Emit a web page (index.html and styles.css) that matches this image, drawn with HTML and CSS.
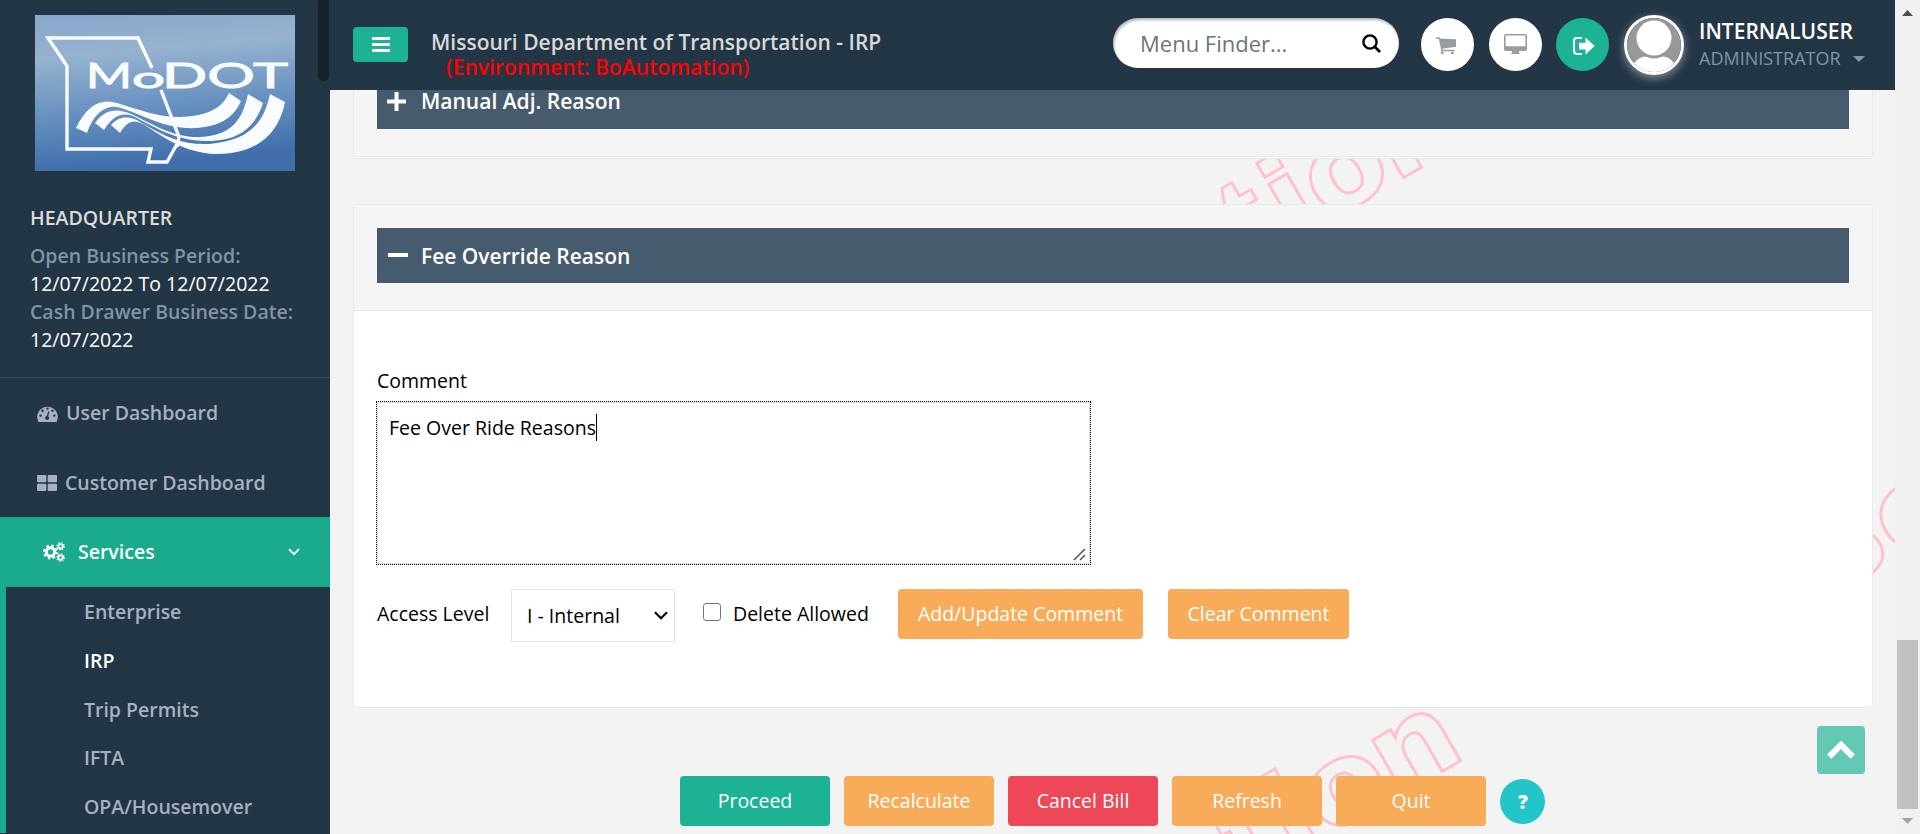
FILE: index.html
```html
<!DOCTYPE html>
<html lang="en">
<head>
<meta charset="utf-8">
<title>Missouri Department of Transportation - IRP</title>
<link rel="stylesheet" href="styles.css">
</head>
<body>
<div class="app">
  <aside class="sidebar">
    <svg class="logo" viewBox="0 0 260 156">
      <defs>
        <linearGradient id="sky" x1="0" y1="0" x2="0.15" y2="1">
          <stop offset="0" stop-color="#8aa6cb"/><stop offset="0.28" stop-color="#96b2cf"/>
          <stop offset="0.65" stop-color="#6690c0"/><stop offset="1" stop-color="#3f6eab"/>
        </linearGradient>
      </defs>
      <rect width="260" height="156" fill="url(#sky)"/>
      <path d="M117 53L103 23H13L32 51V134H116L113 147H132L142 129M126 75L144 122L142 132" fill="none" stroke="#f8fcff" stroke-width="3.4"/>
      <g fill="#f8fcff">
        <path d="M41 113C52 90 66 83 82 88C108 96 130 105 157 101C178 98 188 91 194 78L206 86C198 104 184 111 162 113C128 115 104 97 82 92C68 90 58 101 52 118Z"/>
        <path d="M60 108C70 94 82 93 96 99C118 109 138 123 166 122C194 120 207 108 213 79L228 88C219 115 202 126 171 126C140 126 116 110 98 101C84 96 76 104 69 115Z"/>
        <path d="M76 110C84 101 94 100 107 108C130 122 148 130 174 129C210 126 228 112 235 79L250 87C243 122 219 139 181 139C150 138 130 123 108 109C97 103 91 108 85 118Z"/>
      </g>
      <g class="logo-text">
        <text x="51" y="73" font-size="35" textLength="46" lengthAdjust="spacingAndGlyphs">M</text>
        <text x="97" y="73" font-size="29" textLength="33" lengthAdjust="spacingAndGlyphs">o</text>
        <text x="127" y="73" font-size="35" textLength="126" lengthAdjust="spacingAndGlyphs">DOT</text>
      </g>
    </svg>
    <div class="side-thumb"></div>
    <div class="office">
      <div class="office-name">HEADQUARTER</div>
      <div class="muted">Open Business Period:</div>
      <div class="value">12/07/2022 To 12/07/2022</div>
      <div class="muted">Cash Drawer Business Date:</div>
      <div class="value">12/07/2022</div>
    </div>
    <nav class="menu">
      <a class="item user"><svg class="i-gauge" viewBox="0 0 21 17"><path d="M1.2 16.4A10.3 10.3 0 1 1 19.8 16.4Q19.5 17 19 17H2Q1.5 17 1.2 16.4Z" fill="#a7b1c2"/><g fill="#233646"><circle cx="3.6" cy="10.6" r="1.2"/><circle cx="5.5" cy="5.8" r="1.2"/><circle cx="10.5" cy="3.6" r="1.2"/><circle cx="15.5" cy="5.8" r="1.2"/><circle cx="17.4" cy="10.6" r="1.2"/><circle cx="10.1" cy="12.9" r="2"/></g><path d="M10.1 12.5L11.9 6.5" stroke="#233646" stroke-width="1.3"/></svg><span>User Dashboard</span></a>
      <a class="item customer"><svg class="i-grid" viewBox="0 0 20 16" fill="#a7b1c2"><rect width="9.3" height="7.3" rx="1"/><rect x="10.7" width="9.3" height="7.3" rx="1"/><rect y="8.7" width="9.3" height="7.3" rx="1"/><rect x="10.7" y="8.7" width="9.3" height="7.3" rx="1"/></svg><span>Customer Dashboard</span></a>
      <a class="item services"><svg class="i-cogs" viewBox="0 0 22 20" fill="none" stroke="#fff"><circle cx="7.5" cy="10" r="4.2" stroke-width="3"/><circle cx="7.5" cy="10" r="6.5" stroke-width="2" stroke-dasharray="2.55 2.55"/><circle cx="17.6" cy="4.3" r="2.2" stroke-width="1.8"/><circle cx="17.6" cy="4.3" r="3.6" stroke-width="1.3" stroke-dasharray="1.41 1.41"/><circle cx="17.6" cy="15.6" r="2.2" stroke-width="1.8"/><circle cx="17.6" cy="15.6" r="3.6" stroke-width="1.3" stroke-dasharray="1.41 1.41"/></svg><span>Services</span><svg class="i-down" viewBox="0 0 12 8"><path d="M1 1.2L6 6.2L11 1.2" fill="none" stroke="#fff" stroke-width="1.8"/></svg></a>
      <div class="sub">
        <a>Enterprise</a>
        <a class="on">IRP</a>
        <a>Trip Permits</a>
        <a>IFTA</a>
        <a>OPA/Housemover</a>
      </div>
    </nav>
  </aside>

  <div class="page">
    <header class="top">
      <div class="burger"><svg width="18" height="15" viewBox="0 0 18 15"><path d="M0 1.6H18M0 7.5H18M0 13.4H18" stroke="#fff" stroke-width="3"/></svg></div>
      <div class="title">
        <div>Missouri Department of Transportation - IRP</div>
        <div class="env">(Environment: BoAutomation)</div>
      </div>
      <div class="search"><span>Menu Finder...</span><svg width="19" height="19" viewBox="0 0 19 19" fill="none" stroke="#000"><circle cx="8" cy="8" r="6.6" stroke-width="2.4"/><path d="M12.5 12.5L18 18" stroke-width="2.8"/></svg></div>
      <div class="round cart"><svg width="20" height="18" viewBox="0 0 20 18"><path d="M3.4 1.5L20 2.3V9.8L6 11.7Z" fill="#999da1"/><path d="M0 .9H3.4L6 13.6M5 13.4H18.5" fill="none" stroke="#999da1" stroke-width="1.5"/><circle cx="6.3" cy="15.9" r="1.4" fill="#999da1"/><circle cx="16.4" cy="15.9" r="1.4" fill="#999da1"/></svg></div>
      <div class="round screen"><svg width="23" height="20" viewBox="0 0 23 20"><path d="M2 0H21Q23 0 23 2V15Q23 17 21 17H15V18.5L16 20H7L8 18.5V17H2Q0 17 0 15V2Q0 0 2 0ZM1.6 1.5V12.2H21.4V1.5Z" fill="#999da1" fill-rule="evenodd"/></svg></div>
      <div class="round exit"><svg width="22" height="18" viewBox="0 0 22 18"><path d="M9 1H4Q1 1 1 4V14Q1 17 4 17H9" fill="none" stroke="#fff" stroke-width="2.1"/><path d="M6 5.8H12.5V.6L21.6 9L12.5 17.4V12.4H6Z" fill="#fff"/></svg></div>
      <div class="avatar"><svg viewBox="0 0 54 54"><circle cx="27" cy="27" r="27" fill="#989898"/><circle cx="27" cy="20" r="17.5" fill="#fff"/><path d="M7 45Q15 37 20 39Q27 42 34 39Q40 37 47 45Q39 54 27 54Q15 54 7 45Z" fill="#fff"/></svg></div>
      <div class="who"><div class="name">INTERNALUSER</div><div class="role">ADMINISTRATOR<i></i></div></div>
    </header>

    <main class="main">
      <svg class="watermark" width="1565" height="744" viewBox="330 90 1565 744" aria-hidden="true">
        <defs>
          <text id="mark" x="-811 -727 -640 -552 -480 -427 -351 -238 -169 -122 -83.5 -9" y="0">BoAu<tspan class="arm">t</tspan>oma<tspan class="arm">t</tspan>ion</text>
        </defs>
        <use href="#mark" transform="translate(1403 178) rotate(-30) scale(1.06 1)"/>
        <use href="#mark" transform="translate(1403 794) rotate(-30) scale(1.06 1)"/>
        <use href="#mark" transform="translate(2564 175) rotate(-30) scale(1.06 1)"/>
      </svg>
      <section class="panel first">
        <div class="bar"><svg width="19" height="19" viewBox="0 0 19 19"><path d="M0 9.5H19M9.5 0V19" stroke="#fff" stroke-width="4"/></svg><span>Manual Adj. Reason</span></div>
      </section>
      <section class="panel second">
        <div class="head">
          <div class="bar"><svg width="20" height="19" viewBox="0 0 20 19"><path d="M0 9H20" stroke="#fff" stroke-width="4"/></svg><span>Fee Override Reason</span></div>
        </div>
        <div class="body">
          <label class="lbl">Comment</label>
          <div class="area"><span>Fee Over Ride Reasons</span><i class="caret"></i><svg class="grip" width="13" height="13" viewBox="0 0 13 13"><path d="M1 12L12 1M7 12L12 7" stroke="#555" stroke-width="1.5"/></svg></div>
          <div class="row">
            <span class="lvl">Access Level</span>
            <div class="select"><span>I - Internal</span><svg width="14" height="9" viewBox="0 0 14 9"><path d="M1 1.2L7 7.2L13 1.2" fill="none" stroke="#000" stroke-width="2.2"/></svg></div>
            <i class="check"></i>
            <span class="del">Delete Allowed</span>
            <div class="btn add">Add/Update Comment</div>
            <div class="btn clear">Clear Comment</div>
          </div>
        </div>
      </section>
      <div class="actions">
        <div class="btn act green">Proceed</div>
        <div class="btn act">Recalculate</div>
        <div class="btn act red">Cancel Bill</div>
        <div class="btn act">Refresh</div>
        <div class="btn act">Quit</div>
        <div class="help">?</div>
      </div>
      <div class="to-top"><svg width="28" height="18" viewBox="0 0 28 18"><path d="M2.2 15.6L14 3.8L25.8 15.6" fill="none" stroke="#fff" stroke-width="6"/></svg></div>
    </main>
  </div>

  <div class="scroll">
    <svg width="11" height="6" viewBox="0 0 11 6"><path d="M0 6L5.5 0L11 6Z" fill="#505050"/></svg>
    <div class="thumb"></div>
    <svg class="dn" width="11" height="6" viewBox="0 0 11 6"><path d="M0 0L5.5 6L11 0Z" fill="#a3a3a3"/></svg>
  </div>
</div>
</body>
</html>
```
FILE: styles.css
```css
* { box-sizing: border-box; }
body { margin: 0; font-family: "Open Sans", "Noto Sans", sans-serif; font-size: 19.5px; color: #000; background: #f3f3f3; overflow: hidden; }
svg { display: block; flex: none; }
span, div, a { white-space: nowrap; }
.app { display: grid; grid-template-columns: 330px 1565px 25px; height: 834px; overflow: hidden; }

.sidebar { background: #233646; height: 834px; overflow: hidden; position: relative; }
.logo { width: 260px; height: 156px; margin: 15px 0 0 35px; }
.logo-text { font-family: Lato, sans-serif; font-weight: 400; fill: #f8fcff; stroke: #f8fcff; stroke-width: 0.9; }
.side-thumb { position: absolute; left: 318px; top: -4px; width: 11px; height: 85px; border-radius: 6px; background: #17212a; }
.office { height: 207px; padding: 33px 0 0 30px; border-bottom: 1px solid #3c4d5c; line-height: 28px; }
.office-name { color: #dcdcdc; font-weight: 600; margin-bottom: 10px; }
.muted { color: #8095a8; font-weight: 600; }
.value { color: #fff; }
.menu { font-weight: 600; color: #a7b1c2; line-height: 28px; }
.item { display: flex; align-items: center; height: 70px; }
.user { padding-left: 37px; gap: 8px; }
.customer { padding-left: 37px; gap: 8px; height: 69px; }
.services { height: 70px; padding: 0 30px 0 43px; background: #1aaa8d; color: #fff; }
.i-gauge { width: 21px; height: 17px; }
.i-grid { width: 20px; height: 16px; }
.i-cogs { width: 22px; height: 20px; margin-right: 13px; }
.i-down { width: 12px; height: 8px; margin-left: auto; }
.sub { border-left: 6px solid #1aaa8d; padding-left: 78px; height: 246px; display: flex; flex-direction: column; }
.sub a { height: 48.8px; padding-top: 11px; flex: none; }
.sub .on { color: #fff; }

.page { height: 834px; overflow: hidden; }
.top { height: 90px; background: #233646; display: flex; align-items: flex-start; padding-left: 23px; position: relative; z-index: 2; }
.burger { width: 55px; height: 35px; margin-top: 27px; border-radius: 4px; background: #1cb394; display: flex; align-items: center; justify-content: center; }
.title { margin: 30px 0 0 23px; width: 682px; font-size: 21px; font-weight: 600; line-height: 25px; color: #d9d9d9; }
.env { color: #f00; padding-left: 15px; }
.search { width: 286px; height: 50px; margin-top: 18px; border-radius: 25px; background: #fff; box-shadow: inset 1px 2px 3px rgba(0,0,0,.3); display: flex; align-items: center; padding: 0 18px 0 27px; justify-content: space-between; font-size: 22px; color: #6c757d; }
.round { width: 53px; height: 53px; margin-top: 18px; border-radius: 50%; background: #fff; display: flex; align-items: center; justify-content: center; }
.cart { margin-left: 22px; padding: 3px 4px 0 0; }
.screen { margin-left: 15px; padding-bottom: 2px; }
.exit { margin-left: 14px; background: #1cb394; padding: 3px 0 0 2px; }
.avatar { width: 60px; height: 60px; margin: 15px 0 0 15px; border-radius: 50%; border: 3px solid #fff; box-shadow: 0 3px 10px rgba(255,255,255,.45); }
.who { margin: 17px 0 0 15px; line-height: 28px; color: #fff; }
.name { font-weight: 600; font-size: 21px; height: 27px; }
.role { font-size: 18px; color: #8095a8; display: flex; align-items: center; gap: 12px; height: 27px; }
.role i { border: 6px solid transparent; border-top-color: #8095a8; border-bottom: 0; margin-top: 3px; }

.main { position: relative; height: 744px; background: #f3f3f3; padding: 0 23px; }
.watermark { position: absolute; left: 0; top: 0; font-family: "DejaVu Sans", sans-serif; font-weight: 700; font-size: 113px; fill: none; stroke: #ffc0cb; stroke-width: 2.7; }
.arm { font-family: "Liberation Sans", Arial, sans-serif; font-size: 125px; }
.panel { position: relative; width: 1520px; background: #f5f5f5; border: 1px solid #e7eaec; border-radius: 4px; }
.first { height: 69px; border-top: 0; border-radius: 0 0 4px 4px; padding: 0 23px; box-shadow: inset 0 -1px #fff, inset 0 -2px #e7eaec; }
.bar { height: 55px; background: #475b6f; display: flex; align-items: center; color: #fff; font-size: 21px; font-weight: 600; padding-left: 11px; gap: 13px; }
.first .bar { height: 39px; padding: 0 0 17px 10px; gap: 15px; }
.second { margin-top: 45px; height: 504px; background: #fff; overflow: hidden; }
.head { height: 106px; padding: 23px 23px 0; background: #f5f5f5; border-bottom: 1px solid #e7eaec; }
.body { padding: 56px 23px 0; }
.lbl { display: block; line-height: 28px; margin-bottom: 6px; }
.area { position: relative; display: flex; width: 715px; height: 164px; margin-left: -1px; border: 1px dotted #000; box-shadow: inset 0 0 0 1px #ddd; padding: 11px 12px; line-height: 30px; }
.caret { width: 1px; height: 27px; background: #000; margin-top: 1px; }
.grip { position: absolute; right: 4px; bottom: 3px; }
.row { display: flex; align-items: flex-start; margin-top: 24px; line-height: 50px; }
.lvl { width: 134px; }
.select { width: 164px; height: 53px; border: 1px solid #e2e2e2; display: flex; align-items: center; justify-content: space-between; padding: 0 6px 0 15px; }
.check { width: 18px; height: 18px; border: 1.5px solid #767676; border-radius: 3px; margin: 14px 12px 0 28px; }
.del { width: 165px; }
.btn { height: 50px; line-height: 50px; border-radius: 4px; background: #f8ac59; color: #fff; text-align: center; }
.add { width: 245px; }
.clear { width: 181px; margin-left: 25px; }
.actions { position: relative; display: flex; margin: 68px 0 0 327px; gap: 14px; }
.act { width: 150px; }
.green { background: #1cb394; }
.red { background: #ed4758; }
.help { width: 45px; height: 45px; margin-top: 3px; border-radius: 50%; background: #23c6c8; color: #fff; font-weight: 800; line-height: 45px; text-align: center; padding-left: 1px; }
.to-top { position: absolute; right: 30px; top: 636px; width: 48px; height: 48px; border-radius: 4px; background: #64c9b4; display: flex; align-items: center; justify-content: center; }

.scroll { background: #f1f1f1; display: flex; flex-direction: column; align-items: center; padding-top: 10px; }
.thumb { width: 21px; height: 169px; background: #c1c1c1; margin: 624px 0 9px; }
```
